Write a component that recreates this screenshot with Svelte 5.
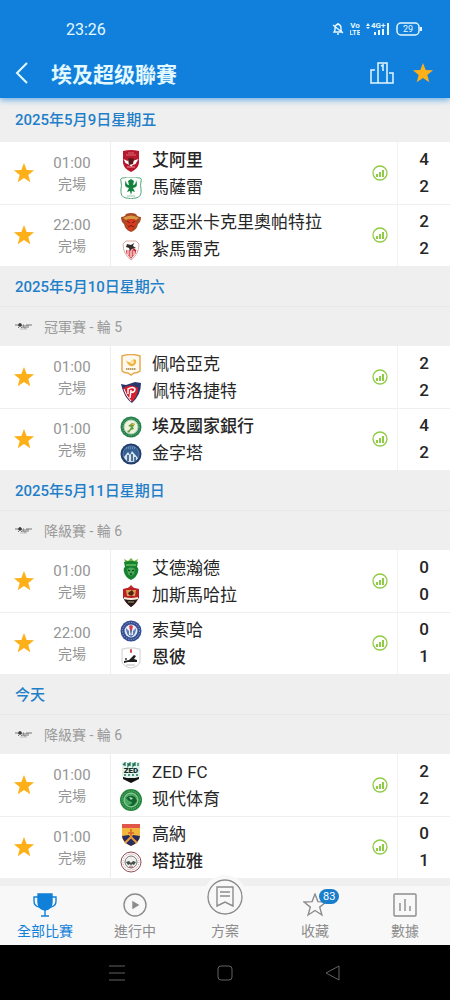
<script lang="ts">
  type Team = { name: string; crest: string; score: number; winner?: boolean };
  type Match = { time: string; status: string; home: Team; away: Team };
  type Day = { date: string; round?: string; matches: Match[] };

  const team = (name: string, crest: string, score: number, winner = false): Team => ({
    name,
    crest,
    score,
    winner,
  });

  const match = (time: string, home: Team, away: Team): Match => ({
    time,
    status: "完場",
    home,
    away,
  });

  const days: Day[] = [
    {
      date: "2025年5月9日星期五",
      matches: [
        match("01:00", team("艾阿里", "ahly", 4, true), team("馬薩雷", "masry", 2)),
        match("22:00", team("瑟亞米卡克里奧帕特拉", "ceramica", 2), team("紮馬雷克", "zamalek", 2)),
      ],
    },
    {
      date: "2025年5月10日星期六",
      round: "冠軍賽 - 輪 5",
      matches: [
        match("01:00", team("佩哈亞克", "haras", 2), team("佩特洛捷特", "petrojet", 2)),
        match("01:00", team("埃及國家銀行", "bank", 4, true), team("金字塔", "pyramids", 2)),
      ],
    },
    {
      date: "2025年5月11日星期日",
      round: "降級賽 - 輪 6",
      matches: [
        match("01:00", team("艾德瀚德", "ittihad", 0), team("加斯馬哈拉", "mahalla", 0)),
        match("22:00", team("索莫哈", "smouha", 0), team("恩彼", "enppi", 1, true)),
      ],
    },
    {
      date: "今天",
      round: "降級賽 - 輪 6",
      matches: [
        match("01:00", team("ZED FC", "zed", 2), team("现代体育", "modern", 2)),
        match("01:00", team("高納", "gouna", 0), team("塔拉雅", "talaea", 1, true)),
      ],
    },
  ];

  const tabs = [
    { id: "all", label: "全部比賽" },
    { id: "live", label: "進行中" },
    { id: "plan", label: "方案" },
    { id: "saved", label: "收藏", badge: 83 },
    { id: "data", label: "數據" },
  ];

  let activeTab = $state("all");

  const starPath = "M12 1l2.900 7.600 8.100.400-6.300 5.100 2.200 7.900-6.900-4.500L5.100 22l2.200-7.900L1 9l8.100-.400z";

  // Club crests, all drawn on a 22 x 22 grid
  const crests: Record<string, string> = {
    ahly: `<path d="M3 1q8-2 16 0v12q-1 6-8 9-7-3-8-9z" fill="#b8182c"/>
      <path d="M6 5h10M8 3h6" stroke="#d86a76" stroke-width="1"/>
      <path d="M3.500 9l4 2 2-2 3 2 6-2-3 5-3 1-1 2-2-2-4-2z" fill="#fff"/>
      <path d="M8 9q3-2 6 0l-1 5-4 1z" fill="#5a1a1c"/>
      <path d="M7 17h8" stroke="#e8909a"/>`,
    masry: `<path d="M2 1q3 0 4-1h10q1 1 4 1 2 0 1 4-1 3 0 7 1 8-5 9-3 0-5 1-2-1-5-1-6-1-5-9 1-4 0-7-1-4 1-4z" fill="#fff" stroke="#54a878"/>
      <path d="M6 3q-3 7 3 8l-2 4 3-1 1 4 1-4 3 1-2-4q6-1 3-8 0 5-3 5l1-4-3-2-3 2 1 4q-3 0-3-5z" fill="#12823c"/>
      <path d="M7 19h8" stroke="#9cc8ac"/>`,
    ceramica: `<path d="M1 5q4 0 5-3 5-2 10 0 1 3 5 3 0 5-3 7-1 6-7 8-6-2-7-8-3-2-3-7z" fill="#a84a25"/>
      <path d="M3 6q8-5 16 0l-3 2q-5-2-10 0z" fill="#d89a45"/>
      <path d="M6 8q5-2 10 0l-1 6q-2 4-4 5-3-1-4-5z" fill="#d83a20"/>
      <path d="M7 9l3 2m5-2l-3 2m-4 4q3-3 6 0" stroke="#701d15" fill="none"/>`,
    zamalek: `<path d="M3 5l3-3h10l3 3q0 10-8 16Q3 15 3 5z" fill="#fff" stroke="#dba9a6"/>
      <path d="M6 11v3l5 6 5-6v-3z" fill="#de5a5f"/>
      <path d="M8 11v5m3-5v7m3-7v5" stroke="#fff"/>
      <path d="M7 5l4 1 3-2-1 3 3 2-4 1-2 2-1-3-3-1z" fill="#352d2d"/>
      <path d="M13 10l3 2" stroke="#c2242c" stroke-width="2"/>`,
    haras: `<path d="M2 2q9-3 18 0v15q-2 2-6 2l-3 2-3-2q-4 0-6-2z" fill="#fffaf0" stroke="#e6aa50" stroke-width="1.500"/>
      <path d="M6 6q2 3 5 2 2-4 5-2 1 4-3 6-5 1-7-6z" fill="#efb33e"/>
      <circle cx="12" cy="8" r="2" fill="#fbe7a8"/>
      <path d="M6 15h10" stroke="#b99a62" stroke-width="2" stroke-dasharray="1.500 .5"/>`,
    petrojet: `<path d="M1 3l5 1 9-3 6 1q0 12-9 20Q4 17 1 3z" fill="#28386c"/>
      <path d="M3 7q8-5 15 0 0 8-6 14Q5 16 3 7z" fill="#d5202f"/>
      <path d="M8 13V8q5-3 7 0 0 4-5 3m0 6l1-8" stroke="#fff" stroke-width="1.500" fill="none"/>
      <path d="M4 8q2 7 7 12" stroke="#fff" fill="none"/>`,
    bank: `<circle cx="11" cy="11" r="10.500" fill="#27814c"/>
      <circle cx="11" cy="11" r="7" fill="#eef2df" stroke="#b8d5b9"/>
      <circle cx="11" cy="11" r="8.500" fill="none" stroke="#6fb083" stroke-dasharray="1 1.500"/>
      <path d="M7 15q3-1 4-4l-3-1 4-3 3 1-2 3 1 2-3 1-2 3z" fill="#6aa044"/>
      <path d="M11 9l3-2 1 2z" fill="#e2b738"/>`,
    pyramids: `<circle cx="11" cy="11" r="10.500" fill="#223f70"/>
      <circle cx="11" cy="11" r="8" fill="#365f93" stroke="#5c7ca5"/>
      <path d="M4 14l4-5 2 3 2-4 6 7q-2 4-7 4t-7-5z" fill="#d8e7ef"/>
      <path d="M8 12v6m4-7v7m3-4v4" stroke="#234a78" stroke-width="1.500"/>
      <path d="M6 5h10" stroke="#9ab5d1" stroke-dasharray="1 1"/>`,
    ittihad: `<path d="M5 4L4 1l4 2 3-3 3 3 4-2-1 3z" fill="#76b548"/>
      <path d="M4 4q7-2 14 0l-1 5q2 1 1 5-1 5-7 8-6-3-7-8-1-4 1-5z" fill="#16822f"/>
      <path d="M6 7h10" stroke="#4fae52" stroke-width="2"/>
      <path d="M7 11q4-3 8 0l-1 5q-3 3-6 0z" fill="#4fa85a"/>
      <path d="M8 12l2 1m4-1l-2 1m-2 3h2" stroke="#073f17" stroke-width="1.300"/>`,
    mahalla: `<path d="M8 3l3-3 3 3z" fill="#bc3530"/>
      <path d="M3 4q8-3 16 0v8q-2 6-8 10-6-4-8-10z" fill="#bb2028"/>
      <path d="M3 12q8 3 16 0l-3 5q-2 3-5 5-6-5-8-10z" fill="#211d1d"/>
      <path d="M6 5h10l-1 6H7z" fill="#d8a04c"/>
      <path d="M8 8l4-3 2 3-2 3-3-1z" fill="#512417"/>
      <path d="M4 13q7 2 14 0" stroke="#f5ead8" fill="none" stroke-width="2"/>
      <path d="M8 17h6" stroke="#b59b65"/>`,
    smouha: `<circle cx="11" cy="11" r="10.500" fill="#354f93"/>
      <circle cx="11" cy="11" r="8.500" fill="none" stroke="#a9b6d8" stroke-dasharray="1 1.500"/>
      <circle cx="11" cy="11" r="6.500" fill="#e7ecf5"/>
      <path d="M6 8q0 7 5 9 5-2 5-9l-3 3v4h-4v-4z" fill="#577dba"/>
      <path d="M10 9h2l-1 7z" fill="#303d65"/>
      <path d="M9 6l2-1 2 1-1 4h-2z" fill="#da394b"/>`,
    enppi: `<path d="M2 2q4 0 5-1h8q1 1 5 1v13q-2 5-9 6-7-1-9-6z" fill="#fff" stroke="#ccc"/>
      <path d="M4 14l5-1 5-5 2 1-2 3 3 1v2H8l-4 1z" fill="#202020"/>
      <circle cx="6" cy="12" r="1" fill="#333"/>
      <path d="M11 2v4m-1-2h2" stroke="#d64650" stroke-width="1.500"/>
      <path d="M6 18h9" stroke="#bbb"/>`,
    zed: `<path d="M2 0h18v15l-9 6-9-6z" fill="#dff3ea"/>
      <path d="M3 3l2-2v3m3-3v3l2-3v3m3-3v3l2-3v3m3-3v3M4 13h2m2 0h2m2 0h2m2 0h2" stroke="#25735b" stroke-width="1.300" fill="none"/>
      <text x="11" y="11" text-anchor="middle" font-size="8" font-weight="900" font-family="Roboto, sans-serif" fill="#142c25">ZED</text>
      <path d="M3 15l4 1h8l4-1v2l-4 2-4 2-4-2-4-2z" fill="#111"/>`,
    modern: `<circle cx="11" cy="11" r="11" fill="#23843d"/>
      <circle cx="11" cy="11" r="9" fill="none" stroke="#7dc089" stroke-dasharray="1 1.200"/>
      <circle cx="11" cy="11" r="7" fill="#49a960" stroke="#a5d6ac"/>
      <path d="M6 9q4-4 9-1l2 4-3 4q-3 2-6 0 4 0 4-3-4-1-6-4z" fill="#12632e"/>
      <path d="M9 8l4 1-2 2" fill="#b8e2c1"/>`,
    gouna: `<path d="M2 0h18v14q-2 5-9 8-7-3-9-8z" fill="#f2b83c"/>
      <path d="M2 0h18v4H2z" fill="#e0574a"/>
      <path d="M2 12l7-1 2 3 2-3 7 1q-1 7-9 10-8-3-9-10z" fill="#272b5f"/>
      <path d="M11 5v8m-3-4h6" stroke="#d9602f" stroke-width="1.500" fill="none"/>
      <path d="M5 19l6-6 6 6" stroke="#ef9b36" stroke-width="2" fill="none"/>`,
    talaea: `<circle cx="11" cy="11" r="10" fill="#fff" stroke="#8e4f55"/>
      <circle cx="11" cy="11" r="8" fill="none" stroke="#c98d93" stroke-dasharray="1 1"/>
      <circle cx="11" cy="11" r="6" fill="#edf0ed" stroke="#777"/>
      <path d="M6 11l3-1 2 2 2-2 3 1-2 3-2-1-1 2-1-2-2 1z" fill="#484e4b"/>
      <path d="M9 16h4" stroke="#b94855"/>`,
  };
</script>

{#snippet star()}
  <svg class="star" viewBox="0 0 24 24" aria-hidden="true"><path d={starPath} /></svg>
{/snippet}

<div class="app">
  <header>
    <div class="status-bar">
      <span class="clock">23:26</span>
      <div class="status-icons">
        <svg width="12" height="14" viewBox="0 0 12 14" fill="none" stroke="currentColor" stroke-width="1.4">
          <path d="M2 10l1-2V6q0-3 3-4 3 1 3 4v2l1 2zM5 12h2M1 3l10 8M6 1v1" />
        </svg>
        <svg class="volte" width="10" height="14" viewBox="0 0 10 14" fill="currentColor">
          <text x="5" y="6" text-anchor="middle">Vo</text>
          <text class="lte" x="5" y="13" text-anchor="middle">LTE</text>
        </svg>
        <svg class="signal" width="24" height="14" viewBox="0 0 24 14" fill="currentColor">
          <path d="M0 4l2-3 2 3zM0 5h4l-2 2zM8 10h2v3H8zM12 8h2v5h-2zM16 7h2v6h-2zM21 1h2v12h-2z" />
          <text x="5" y="6">4G+</text>
        </svg>
        <svg class="battery" width="26" height="14" viewBox="0 0 26 14" fill="none" stroke="currentColor">
          <rect x="1" y="1" width="22" height="12" rx="4" stroke-width="1.5" />
          <path d="M25 5v4" stroke-width="2" />
          <text x="12" y="10" text-anchor="middle">29</text>
        </svg>
      </div>
    </div>
    <div class="toolbar">
      <button class="back" aria-label="返回">
        <svg width="14" height="22" viewBox="0 0 14 22"><path d="M12 1L2 11l10 10" /></svg>
      </button>
      <h1>埃及超级聯賽</h1>
      <button aria-label="排名">
        <svg class="podium" width="24" height="22" viewBox="0 0 24 22">
          <path d="M8 21V1h9v20M5 8H1v13h22V11h-4M11 4l2-1v6" />
        </svg>
      </button>
      <button class="favourite" aria-label="收藏聯賽">{@render star()}</button>
    </div>
  </header>

  <main>
    {#each days as day}
      <section>
        <h2>{day.date}</h2>
        {#if day.round}
          <div class="round">
            <svg width="18" height="10" viewBox="0 0 18 10" fill="none" stroke="#777">
              <circle cx="5" cy="4" r="1.500" fill="#333" stroke="#555" />
              <path d="M0 4h3M3 7l2-2 2 2M8 7V4l1 0v3h2V4h2v3m0-3h4" />
              <path d="M5 8h7" stroke="#bbb" />
            </svg>
            <span>{day.round}</span>
          </div>
        {/if}
        <ul>
          {#each day.matches as game}
            <li class="match">
              <button class="fav" aria-label="收藏">{@render star()}</button>
              <div class="when">
                <time>{game.time}</time>
                <span>{game.status}</span>
              </div>
              <div class="teams">
                {#each [game.home, game.away] as side}
                  <div class="team" class:winner={side.winner}>
                    <svg width="22" height="22" viewBox="0 0 22 22" aria-hidden="true">
                      {@html crests[side.crest]}
                    </svg>
                    <span>{side.name}</span>
                  </div>
                {/each}
              </div>
              <button class="stats" aria-label="統計">
                <svg width="16" height="16" viewBox="0 0 16 16">
                  <circle cx="8" cy="8" r="7" />
                  <path d="M5 9v3M8 7v5M11 5v7" />
                </svg>
              </button>
              <div class="scores">
                <span>{game.home.score}</span>
                <span>{game.away.score}</span>
              </div>
            </li>
          {/each}
        </ul>
      </section>
    {/each}
  </main>

  <nav class="tabs">
    {#each tabs as tab}
      <button class:active={activeTab === tab.id} onclick={() => (activeTab = tab.id)}>
        <span class="tab-icon" class:raised={tab.id === "plan"}>
          {#if tab.id === "all"}
            <svg width="24" height="24" viewBox="0 0 24 24">
              <path d="M5 1h14v8q0 7-7 8-7-1-7-8z" fill="currentColor" />
              <path d="M5 4H1v4q0 5 5 6M19 4h4v4q0 5-5 6M12 16v7M8 23h8" />
            </svg>
          {:else if tab.id === "live"}
            <svg width="24" height="24" viewBox="0 0 24 24">
              <circle cx="12" cy="12" r="11" />
              <path d="M10 9l5 3-5 3z" fill="currentColor" />
            </svg>
          {:else if tab.id === "plan"}
            <svg width="36" height="36" viewBox="0 0 36 36">
              <circle cx="18" cy="18" r="17" />
              <path d="M10 8h16v19l-8-4-8 4zM13 13h10M13 17h10" />
            </svg>
          {:else if tab.id === "saved"}
            <svg width="24" height="24" viewBox="0 0 24 24"><path d={starPath} /></svg>
          {:else}
            <svg width="24" height="24" viewBox="0 0 24 24">
              <rect x="1" y="1" width="22" height="22" rx="1" />
              <path d="M7 10v8M12 6v12M17 13v5" />
            </svg>
          {/if}
          {#if tab.badge}
            <span class="badge">{tab.badge}</span>
          {/if}
        </span>
        <span>{tab.label}</span>
      </button>
    {/each}
  </nav>

  <div class="system-bar">
    <button aria-label="選單">
      <svg width="18" height="18" viewBox="0 0 18 18"><path d="M1 2h16M1 9h16M1 16h16" /></svg>
    </button>
    <button aria-label="主頁">
      <svg width="18" height="18" viewBox="0 0 18 18"><rect x="2" y="2" width="14" height="14" rx="3" /></svg>
    </button>
    <button aria-label="上一頁">
      <svg width="18" height="18" viewBox="0 0 18 18"><path d="M15 2v14L2 9z" stroke-linejoin="round" /></svg>
    </button>
  </div>
</div>

<style>
  :global(body) {
    margin: 0;
    background: #efefef;
  }

  .app {
    display: flex;
    flex-direction: column;
    min-height: 100vh;
    font-family: Roboto, "Noto Sans CJK TC", sans-serif;
    color: #262626;
  }

  button {
    display: flex;
    align-items: center;
    justify-content: center;
    padding: 0;
    border: 0;
    background: none;
    color: inherit;
    font: inherit;
    cursor: pointer;
  }

  svg {
    display: block;
    flex: none;
  }

  header {
    position: relative;
    background: #1180dc;
    color: #e4f8ff;
    box-shadow: 0 2px 6px rgba(17, 128, 220, 0.6);
  }

  .status-bar {
    display: flex;
    align-items: center;
    justify-content: space-between;
    height: 38px;
    padding: 10px 28px 0 66px;
  }

  .clock {
    font-size: 16px;
  }

  .status-icons {
    display: flex;
    align-items: center;
    gap: 6px;
  }

  .volte text {
    font-size: 8px;
    font-weight: 700;
  }

  .volte .lte {
    font-size: 7px;
  }

  .signal text {
    font-size: 8px;
    font-weight: 700;
  }

  .battery text {
    fill: currentColor;
    stroke: none;
    font-size: 9px;
  }

  .toolbar {
    display: flex;
    align-items: center;
    gap: 18px;
    height: 50px;
    padding: 0 16px 0 15px;
  }

  .toolbar svg {
    fill: none;
    stroke: currentColor;
    stroke-width: 2;
  }

  .toolbar .podium {
    stroke-width: 1.5;
  }

  h1 {
    flex: 1;
    margin: 0 0 0 4px;
    font-size: 21px;
    font-weight: 700;
  }

  .star {
    width: 22px;
    height: 22px;
  }

  .star,
  .toolbar .star {
    fill: #feb019;
    stroke: none;
  }

  main {
    flex: 1;
    padding-bottom: 8px;
  }

  h2 {
    display: flex;
    align-items: center;
    min-height: 38px;
    margin: 0;
    padding: 0 15px 2px;
    color: #1f7fc8;
    font-size: 15px;
    font-weight: 500;
  }

  section:first-child h2 {
    min-height: 40px;
    padding-bottom: 4px;
  }

  .round {
    display: flex;
    align-items: center;
    gap: 11px;
    min-height: 37px;
    padding: 0 15px 2px;
    border-top: 1px solid #e8e8e8;
    color: #9b9b9b;
    font-size: 14px;
  }

  ul {
    margin: 0;
    padding: 0;
    list-style: none;
  }

  .match {
    display: flex;
    align-items: stretch;
    min-height: 62px;
    background: #fff;
  }

  .match + .match {
    box-shadow: inset 0 1px #efefef;
  }

  .fav {
    width: 48px;
  }

  .when {
    display: flex;
    flex-direction: column;
    justify-content: center;
    align-items: center;
    width: 48px;
    margin-right: 14px;
    padding-top: 2px;
    color: #959595;
    font-size: 14px;
    line-height: 21px;
  }

  time {
    font-size: 15px;
  }

  .teams {
    flex: 1;
    display: flex;
    flex-direction: column;
    justify-content: center;
    padding: 2px 0 0 9px;
    border-left: 1px solid #efefef;
  }

  .team {
    display: flex;
    align-items: center;
    gap: 10px;
    font-size: 17px;
    line-height: 27px;
  }

  .winner {
    font-weight: 500;
  }

  .stats {
    width: 34px;
  }

  .stats svg {
    fill: none;
    stroke: #8fcb45;
    stroke-width: 1.3;
  }

  .stats path {
    stroke-width: 2;
  }

  .scores {
    display: flex;
    flex-direction: column;
    justify-content: center;
    width: 52px;
    border-left: 1px solid #f3f3f3;
    text-align: center;
    font-size: 17px;
    font-weight: 500;
    line-height: 27px;
  }

  .tabs {
    display: flex;
    min-height: 59px;
    background: #f8f8f8;
    color: #8c8c8c;
  }

  .tabs button {
    flex: 1;
    flex-direction: column;
    gap: 4px;
    padding-top: 2px;
    font-size: 14px;
    line-height: 20px;
  }

  .tabs svg {
    fill: none;
    stroke: currentColor;
    stroke-width: 1.4;
  }

  .tabs .active {
    color: #1180d8;
  }

  .tab-icon {
    position: relative;
    display: flex;
    align-items: center;
    justify-content: center;
    height: 24px;
  }

  /* the middle tab bulges over the list */
  .raised svg {
    position: absolute;
    bottom: -2px;
    padding: 4px;
    border-radius: 50%;
    background: #f8f8f8;
  }

  .badge {
    position: absolute;
    top: -4px;
    left: 16px;
    padding: 0 4px;
    border-radius: 8px;
    background: #1b7ecb;
    color: #fff;
    font-size: 11px;
    line-height: 15px;
  }

  .system-bar {
    display: flex;
    align-items: center;
    justify-content: center;
    gap: 20%;
    min-height: 55px;
    background: #000;
    color: #626262;
  }

  .system-bar svg {
    fill: none;
    stroke: currentColor;
  }
</style>
